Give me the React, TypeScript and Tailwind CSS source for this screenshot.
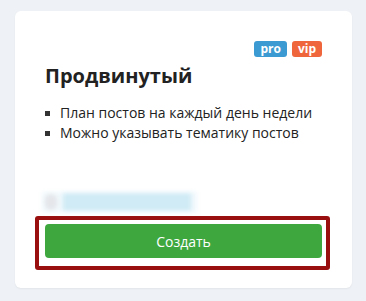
export default function App() {
  return (
    <div
      className="min-h-screen bg-[#eef1f5] px-[15px] pt-[11px]"
      style={{ fontFamily: '"Open Sans", "Noto Sans", sans-serif' }}
    >
      <div className="flex h-[277px] w-[337px] flex-col rounded-[6px] bg-white px-[30px] pt-[30px] pb-[18px] shadow-[0_1px_2px_rgba(0,0,0,0.05)]">
        {/* plan badges */}
        <div className="flex justify-end gap-[5px]">
          <span className="flex h-4 items-center rounded-[3px] bg-[#3c9ad2] px-[6px] text-[12px] leading-none font-bold text-white">
            pro
          </span>
          <span className="flex h-4 items-center rounded-[3px] bg-[#f0663c] px-[6px] text-[12px] leading-none font-bold text-white">
            vip
          </span>
        </div>

        <h2 className="mt-[5px] text-[20px] leading-[28px] font-bold text-[#222]">
          Продвинутый
        </h2>

        <ul className="mt-[13px] flex flex-col text-[14px] leading-5 text-[#222]">
          <li className="flex items-center gap-[10px]">
            <span className="h-[5px] w-[5px] bg-[#333]" />
            План постов на каждый день недели
          </li>
          <li className="flex items-center gap-[10px]">
            <span className="h-[5px] w-[5px] bg-[#333]" />
            Можно указывать тематику постов
          </li>
        </ul>

        {/* blurred link */}
        <div className="mt-auto -ml-[3px] flex h-5 w-[155px] items-center bg-[#f0f8fc] blur-[2px]">
          <span className="ml-[3px] h-[16px] w-[12px] rounded-full bg-[#e4e6ea]" />
          <span className="ml-[6px] h-[18px] w-[128px] bg-[#d0ebf6]" />
        </div>

        <div className="mt-1 -mr-[8px] -ml-[10px] rounded-[3px] border-4 border-[#990f0f] pt-1 pr-1 pb-2 pl-[6px]">
          <button className="flex h-[34px] w-full items-center justify-center rounded-[4px] bg-[#3ea83f] text-[14px] text-white">
            Создать
          </button>
        </div>
      </div>
    </div>
  );
}
